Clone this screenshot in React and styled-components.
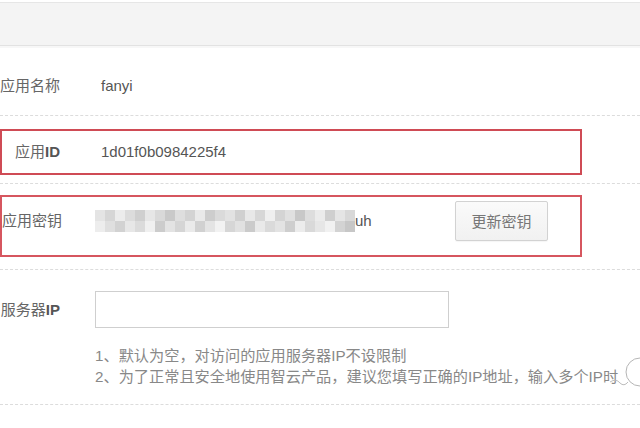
import React from 'react';
import styled, { createGlobalStyle } from 'styled-components';

const GlobalStyle = createGlobalStyle`
  html, body {
    margin: 0;
    padding: 0;
    background: #fff;
  }
  body {
    width: 640px;
    height: 428px;
    overflow: hidden;
    font-family: "Liberation Sans", "Noto Sans CJK SC", sans-serif;
  }
`;

const Page = styled.div`
  position: relative;
  width: 640px;
  height: 428px;
  overflow: hidden;
  background: #fff;
`;

const Header = styled.div`
  height: 42px;
  margin-top: 2px;
  background: #f4f4f4;
  border-top: 1px solid #e6e6e6;
  border-bottom: 1px solid #e2e2e2;
`;

const HeaderShade = styled.div`
  height: 2px;
  background: #f7f7f7;
`;

const Row = styled.div`
  display: flex;
  align-items: ${p => (p.$top ? 'flex-start' : 'center')};
  padding: ${p => p.$pad};
  border-bottom: 1px dashed #dcdcdc;
`;

const Frame = styled.div`
  display: flex;
  align-items: center;
  box-sizing: border-box;
  width: 582px;
  height: ${p => p.$h}px;
  padding-bottom: ${p => p.$lift || 0}px;
  border: 2px solid ${p => p.$color};
`;

const Label = styled.div`
  flex: none;
  width: ${p => p.$w || 60}px;
  text-align: right;
  font-size: 15px;
  line-height: 20px;
  color: #666;
  white-space: nowrap;

  b {
    font-weight: bold;
    color: #555;
  }
`;

const Value = styled.div`
  margin-left: 35px;
  padding-left: ${p => (p.$pad ? 6 : 0)}px;
  font-size: 15px;
  line-height: 20px;
  color: #555;
  white-space: nowrap;
`;

const Secret = styled.div`
  display: flex;
  align-items: center;
  margin-left: 35px;
  font-size: 15px;
  color: #555;
`;

const Button = styled.button`
  margin-left: auto;
  margin-right: 32px;
  width: 93px;
  height: 40px;
  border: 1px solid #d2d2d2;
  border-radius: 2px;
  background: linear-gradient(#fafafa, #f1f1f1);
  box-shadow: 0 1px 1px rgba(0, 0, 0, 0.04);
  font-family: "Noto Sans CJK SC", sans-serif;
  font-size: 15px;
  color: #777;
  padding: 0;
`;

const Field = styled.div`
  display: flex;
  flex-direction: column;
`;

const FieldLine = styled.div`
  display: flex;
  align-items: center;
`;

const Input = styled.input`
  box-sizing: border-box;
  margin-left: 35px;
  width: 354px;
  height: 37px;
  border: 1px solid #cfcfcf;
  background: #fff;
  outline: none;
`;

const Help = styled.div`
  margin: 17px 0 0 95px;
  font-size: 15.2px;
  line-height: 21px;
  color: #888;
  white-space: nowrap;
`;

const Watermark = styled.svg`
  position: absolute;
  left: 604px;
  top: 352px;
`;

const mosaic = [
  ['#e4e4e4', '#d6d6d6', '#ececec', '#dcdcdc', '#cfcfcf', '#e6e6e6', '#d9d9d9', '#c9c9c9', '#dedede', '#d3d3d3', '#e9e9e9', '#cdcdcd', '#dadada', '#e2e2e2', '#d0d0d0', '#e8e8e8', '#d7d7d7', '#efefef', '#d4d4d4', '#e0e0e0', '#c8c8c8', '#dddddd', '#ebebeb', '#cfcfcf', '#e5e5e5', '#d8d8d8'],
  ['#ededed', '#dfdfdf', '#d2d2d2', '#e7e7e7', '#dbdbdb', '#f0f0f0', '#cccccc', '#e3e3e3', '#d5d5d5', '#eaeaea', '#d1d1d1', '#e4e4e4', '#f2f2f2', '#d6d6d6', '#e1e1e1', '#cbcbcb', '#e9e9e9', '#dadada', '#e3e3e3', '#cecece', '#ececec', '#d9d9d9', '#e6e6e6', '#f1f1f1', '#d3d3d3', '#c7c7c7'],
];

const Mosaic = () => (
  <svg width="260" height="22" viewBox="0 0 260 22">
    {mosaic.map((row, r) =>
      row.map((c, i) => (
        <rect key={`${r}-${i}`} x={i * 10} y={r * 11} width="10" height="11" fill={c} />
      ))
    )}
  </svg>
);

export default function App() {
  return (
    <Page>
      <GlobalStyle />
      <Header />
      <HeaderShade />

      <Row $pad="28px 0 19px 0">
        <Label>应用名称</Label>
        <Value $pad>fanyi</Value>
      </Row>

      <Row $pad="13px 0 8px 0">
        <Frame $h={46} $color="#cf4b55">
          <Label $w={58}>应用<b>ID</b></Label>
          <Value $pad>1d01f0b0984225f4</Value>
        </Frame>
      </Row>

      <Row $pad="11px 0 12px 0">
        <Frame $h={62} $lift={11} $color="#d6565f">
          <Label $w={58}>应用密钥</Label>
          <Secret>
            <Mosaic />
            <span>uh</span>
          </Secret>
          <Button>更新密钥</Button>
        </Frame>
      </Row>

      <Row $top $pad="21px 0 17px 0">
        <Field>
          <FieldLine>
            <Label>服务器<b>IP</b></Label>
            <Input />
          </FieldLine>
          <Help>
            1、默认为空，对访问的应用服务器IP不设限制
            <br />
            2、为了正常且安全地使用智云产品，建议您填写正确的IP地址，输入多个IP时
          </Help>
        </Field>
      </Row>

      <Watermark width="40" height="44" viewBox="0 0 40 44">
        <circle cx="36" cy="20" r="14" fill="#fff" fillOpacity="0.85" stroke="#b5b5b5" strokeWidth="1" />
        <path d="M6 30 Q12 26 16 31 Q20 35 24 30" fill="none" stroke="#bdbdbd" strokeWidth="1" />
      </Watermark>
    </Page>
  );
}
